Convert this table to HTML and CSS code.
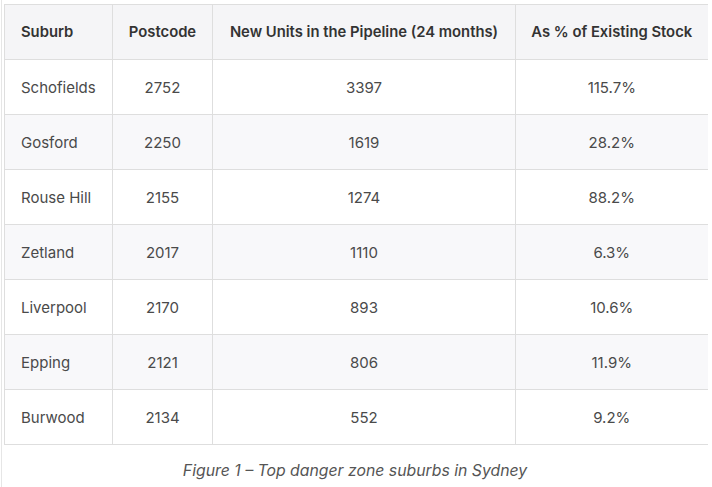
FILE: index.html
```html
<!DOCTYPE html>
<html>
<head>
<meta charset="utf-8">
<link rel="stylesheet" href="styles.css">
</head>
<body>
<div class="page">
  <figure class="fig">
    <table class="data">
      <colgroup>
        <col class="c1"><col class="c2"><col class="c3"><col class="c4">
      </colgroup>
      <thead>
        <tr><th class="left">Suburb</th><th>Postcode</th><th>New Units in the Pipeline (24 months)</th><th>As % of Existing Stock</th></tr>
      </thead>
      <tbody>
        <tr><td class="left">Schofields</td><td>2752</td><td>3397</td><td>115.7%</td></tr>
        <tr class="alt"><td class="left">Gosford</td><td>2250</td><td>1619</td><td>28.2%</td></tr>
        <tr><td class="left">Rouse Hill</td><td>2155</td><td>1274</td><td>88.2%</td></tr>
        <tr class="alt"><td class="left">Zetland</td><td>2017</td><td>1110</td><td>6.3%</td></tr>
        <tr><td class="left">Liverpool</td><td>2170</td><td>893</td><td>10.6%</td></tr>
        <tr class="alt"><td class="left">Epping</td><td>2121</td><td>806</td><td>11.9%</td></tr>
        <tr><td class="left">Burwood</td><td>2134</td><td>552</td><td>9.2%</td></tr>
      </tbody>
    </table>
    <figcaption class="caption">Figure 1 – Top danger zone suburbs in Sydney</figcaption>
  </figure>
</div>
</body>
</html>
```
FILE: styles.css
```css
html, body {
  margin: 0;
  padding: 0;
  background: #ffffff;
}
body {
  font-family: "Inter", "Noto Sans", sans-serif;
  color: #4a4a4a;
}
.page {
  margin-left: 1px;
  border-left: 1px solid #e6e6e6;
  min-height: 487px;
  box-sizing: border-box;
  padding: 4px 0 0 2px;
}
.fig {
  margin: 0;
}
.data {
  border-collapse: collapse;
  table-layout: fixed;
  width: 703px;
  font-size: 15px;
}
.c1 { width: 108px; }
.c2 { width: 100px; }
.c3 { width: 303px; }
.c4 { width: 192px; }
.data th,
.data td {
  border: 1.5px solid #dedede;
  height: 55px;
  padding: 0 6px;
  text-align: center;
  vertical-align: middle;
  box-sizing: border-box;
}
.data tr > :last-child {
  border-right: none;
}
.data th {
  background: #f5f5f7;
  font-weight: 600;
  color: #333333;
  font-size: 14.8px;
}
.data .left {
  text-align: left;
  padding-left: 16px;
}
.data tr.alt td {
  background: #f8f8fa;
}
.caption {
  text-align: center;
  font-style: italic;
  font-size: 15.8px;
  color: #555555;
  padding-top: 16px;
  padding-right: 6px;
}
```
